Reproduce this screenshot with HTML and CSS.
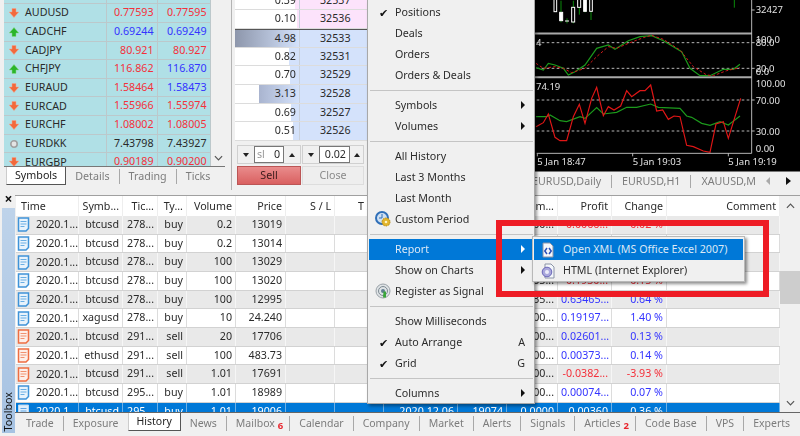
FILE: index.html
```html
<!DOCTYPE html>
<html lang="en">
<head>
<meta charset="utf-8">
<title>History report</title>
<link rel="stylesheet" href="styles.css">
</head>
<body>
<svg class="defs" aria-hidden="true">
  <symbol id="down" viewBox="0 0 10 10"><path d="M3 .5h4v3.500h2.800L5 9.500.2 4H3z" fill="#f2693c" stroke="#f7a58c" stroke-width=".5"/></symbol>
  <symbol id="up" viewBox="0 0 10 10"><path d="M3 9.500h4V6h2.800L5 .5.2 6H3z" fill="#2bb52b" stroke="#8ad88a" stroke-width=".5"/></symbol>
  <symbol id="flat" viewBox="0 0 10 10"><circle cx="5" cy="5" r="3.200" fill="#e4e4e4" stroke="#a0a0a0" stroke-width="1.600"/></symbol>
  <symbol id="docb" viewBox="0 0 13 15"><path d="M1.500 1h10v10.500l-2.500 2.500h-7.500z" fill="#e8f3fc" stroke="#3f93d8" stroke-width="1.500"/><path d="M3.500 4.500h6M3.500 7h6M3.500 9.500h4" stroke="#6aaee4"/></symbol>
  <symbol id="doco" viewBox="0 0 13 15"><path d="M1.500 1h10v10.500l-2.500 2.500h-7.500z" fill="#fdeee8" stroke="#ee6e42" stroke-width="1.500"/><path d="M3.500 4.500h6M3.500 7h6M3.500 9.500h4" stroke="#f1916f"/></symbol>
  <symbol id="docw" viewBox="0 0 13 15"><path d="M1.500 1h10v13h-10z" fill="#dfeefb" stroke="#bcd8f2"/><path d="M3.500 4.500h6M3.500 7h6M3.500 9.500h6" stroke="#5da4e4"/></symbol>
</svg>

<div class="top">
  <section class="market">
    <div class="mw-main">
      <div class="mw-list">
        <div class="mw-row mw-stub"><span></span><span></span><span></span></div>
        <div class="mw-row"><span class="mw-name"><svg class="ar"><use href="#down"/></svg>AUDUSD</span><span class="neg">0.77593</span><span class="neg">0.77595</span></div>
        <div class="mw-row"><span class="mw-name"><svg class="ar"><use href="#up"/></svg>CADCHF</span><span class="pos">0.69244</span><span class="pos">0.69249</span></div>
        <div class="mw-row"><span class="mw-name"><svg class="ar"><use href="#down"/></svg>CADJPY</span><span class="neg">80.921</span><span class="neg">80.927</span></div>
        <div class="mw-row"><span class="mw-name"><svg class="ar"><use href="#up"/></svg>CHFJPY</span><span class="neg">116.862</span><span class="pos">116.870</span></div>
        <div class="mw-row"><span class="mw-name"><svg class="ar"><use href="#down"/></svg>EURAUD</span><span class="neg">1.58464</span><span class="pos">1.58473</span></div>
        <div class="mw-row"><span class="mw-name"><svg class="ar"><use href="#down"/></svg>EURCAD</span><span class="neg">1.55966</span><span class="neg">1.55974</span></div>
        <div class="mw-row"><span class="mw-name"><svg class="ar"><use href="#down"/></svg>EURCHF</span><span class="neg">1.08002</span><span class="neg">1.08005</span></div>
        <div class="mw-row"><span class="mw-name"><svg class="ar"><use href="#flat"/></svg>EURDKK</span><span>7.43798</span><span>7.43927</span></div>
        <div class="mw-row"><span class="mw-name"><svg class="ar"><use href="#down"/></svg>EURGBP</span><span class="neg">0.90189</span><span class="neg">0.90200</span></div>
      </div>
      <div class="mw-scroll"><svg class="chev" viewBox="0 0 10 6"><path d="M1 1l4 4 4-4" fill="none" stroke="#555" stroke-width="1.300"/></svg></div>
    </div>
    <div class="tabs mw-tabs">
      <span class="tab active">Symbols</span>
      <span class="tab">Details</span>
      <span class="tab">Trading</span>
      <span class="tab last">Ticks</span>
    </div>
  </section>

  <section class="depth">
    <div class="dp-list">
      <div class="dp-row ask"><span class="dp-vol"><i class="bar bar-ask" style="width:4px"></i><b>0.39</b></span><span class="dp-price">32537</span></div>
      <div class="dp-row ask"><span class="dp-vol"><i class="bar bar-ask" style="width:2px"></i><b>0.10</b></span><span class="dp-price">32536</span></div>
      <div class="dp-row bid spread"><span class="dp-vol"><i class="bar bar-big" style="width:65px"></i><b>4.98</b></span><span class="dp-price">32533</span></div>
      <div class="dp-row bid"><span class="dp-vol"><i class="bar" style="width:10px"></i><b>0.82</b></span><span class="dp-price">32531</span></div>
      <div class="dp-row bid"><span class="dp-vol"><i class="bar" style="width:9px"></i><b>0.70</b></span><span class="dp-price">32529</span></div>
      <div class="dp-row bid"><span class="dp-vol"><i class="bar bar-mid" style="width:40px"></i><b>3.13</b></span><span class="dp-price">32528</span></div>
      <div class="dp-row bid"><span class="dp-vol"><i class="bar" style="width:8px"></i><b>0.69</b></span><span class="dp-price">32527</span></div>
      <div class="dp-row bid"><span class="dp-vol"><i class="bar" style="width:6px"></i><b>0.51</b></span><span class="dp-price">32526</span></div>
    </div>
    <div class="spin-row">
      <div class="spin spin-a"><span class="sbtn"><i class="tri-d"></i></span><span class="sinput"><em>sl</em>0</span><span class="sbtn"><i class="tri-u"></i></span></div>
      <div class="spin spin-b"><span class="sbtn"><i class="tri-d"></i></span><span class="sinput">0.02</span><span class="sbtn"><i class="tri-u"></i></span></div>
    </div>
    <div class="btn-row">
      <span class="btn sell">Sell</span>
      <span class="btn close">Close</span>
    </div>
  </section>

  <section class="charts">
    <div class="chart">
      <svg class="chart-svg" viewBox="0 0 810 516">
        <g class="candles">
          <path d="M75 0v2M93 2v36M93 62v5M111 55v15M130 2v20M130 66v4M148 22v22M165 35v2M183 35v25" stroke="#0a8a0a" stroke-width="3" fill="none"/>
          <rect x="72" y="-4" width="8" height="39" fill="#000" stroke="#fff" stroke-width="3"/>
          <rect x="89" y="37" width="9" height="25" fill="#fff" stroke="#fff" stroke-width="3"/>
          <path d="M105 63h12" stroke="#fff" stroke-width="3"/>
          <rect x="125" y="22" width="9" height="44" fill="#000" stroke="#fff" stroke-width="3"/>
          <rect x="143" y="-4" width="9" height="26" fill="#000" stroke="#fff" stroke-width="3"/>
          <rect x="161" y="-4" width="8" height="38" fill="#fff" stroke="#fff" stroke-width="3"/>
          <rect x="179" y="-4" width="8" height="38" fill="#000" stroke="#fff" stroke-width="3"/>
          <path d="M613 0v23" stroke="#0a8a0a" stroke-width="3"/>
        </g>
        <path class="pane" d="M0 100.500h665M0 232h665"/>
        <path class="dash" d="M20 128h645M20 205h645M20 300h645M20 393h645"/>
        <polyline class="g1" points="18,203 40,210 55,190 75,195 100,205 115,225 135,215 165,195 200,145 235,135 255,148 295,122 330,110 365,107 400,122 455,155 480,205 510,227 540,227 580,208 610,208 630,193"/>
        <polyline class="r1" points="18,190 40,205 75,200 100,205 125,218 165,205 200,170 235,140 260,145 300,128 340,113 365,106 400,118 450,150 490,200 530,225 550,227 590,212 630,203"/>
        <polyline class="g1" points="18,350 50,350 60,345 90,362 110,365 150,350 165,355 200,323 220,342 260,337 290,322 320,322 362,312 385,322 450,325 470,348 485,352 515,370 540,376 570,365 595,375 630,348"/>
        <polyline class="r2" points="18,380 40,368 55,342 75,412 90,422 110,422 130,350 148,313 165,370 185,295 200,262 220,347 235,320 252,330 272,318 290,272 305,290 330,272 345,272 362,255 380,333 398,330 415,358 432,348 450,350 470,436 490,440 520,453 540,457 558,372 580,365 595,415 615,350 632,295"/>
        <path class="axis" d="M665 0v460M20 460h645M22 460v9M308 460v9M595 460v9M665 30h9M665 128h9M665 205h9M665 300h9M665 393h9"/>
        <text class="tx" x="677" y="40">32427</text>
        <text class="tx" x="677" y="130">100.0</text>
        <text class="tx" x="677" y="139">80.0</text>
        <text class="tx" x="677" y="215">20.0</text>
        <text class="tx" x="677" y="225">0.0</text>
        <text class="tx" x="677" y="261">100.00</text>
        <text class="tx" x="677" y="311">70.00</text>
        <text class="tx" x="677" y="404">30.00</text>
        <text class="tx" x="677" y="456">0.00</text>
        <text class="tx" x="18" y="139">4</text>
        <text class="tx" x="18" y="269">74.19</text>
        <text class="tx" x="22" y="496">5 Jan 18:47</text>
        <text class="tx" x="308" y="496">5 Jan 19:03</text>
        <text class="tx" x="595" y="496">5 Jan 19:19</text>
      </svg>
    </div>
    <div class="tabs ch-tabs">
      <span class="tab">EURUSD,Daily</span>
      <span class="tab">EURUSD,H1</span>
      <span class="tab last">XAUUSD,M</span>
      <i class="nav-l"></i><i class="nav-r"></i>
    </div>
  </section>
</div>

<div class="bottom">
  <aside class="toolbox">
    <span class="tb-x">&#215;</span>
    <div class="tb-strip"><span class="tb-label">Toolbox</span></div>
  </aside>
  <div class="tb-main">
    <div class="grid-wrap">
      <div class="grid">
        <div class="row head"><span class="l">Time</span><span class="r">Symb...</span><span class="r">Tic...</span><span class="r">Ty...</span><span class="r">Volume</span><span class="r">Price</span><span class="r">S / L</span><span class="r">T / P</span><span class="r">Time</span><span class="r">Price</span><span class="r">Comm...</span><span class="r">Profit</span><span class="r">Change</span><span class="r">Comment</span></div>
        <div class="row"><span class="t"><svg class="doc"><use href="#docb"/></svg>2020.1...</span><span class="r">btcusd</span><span class="r">278...</span><span class="r">buy</span><span class="r">0.2</span><span class="r">13019</span><span></span><span></span><span></span><span></span><span class="r">00...</span><span class="r neg">0.0066...</span><span class="r neg">0.02 %</span><span></span></div>
        <div class="row"><span class="t"><svg class="doc"><use href="#docb"/></svg>2020.1...</span><span class="r">btcusd</span><span class="r">278...</span><span class="r">buy</span><span class="r">0.2</span><span class="r">13014</span><span></span><span></span><span></span><span></span><span class="r">00...</span><span class="r neg">0.0091...</span><span class="r neg">0.03 %</span><span></span></div>
        <div class="row"><span class="t"><svg class="doc"><use href="#docb"/></svg>2020.1...</span><span class="r">btcusd</span><span class="r">278...</span><span class="r">buy</span><span class="r">100</span><span class="r">13029</span><span></span><span></span><span></span><span></span><span class="r">00...</span><span class="r neg">0.1245...</span><span class="r neg">0.11 %</span><span></span></div>
        <div class="row"><span class="t"><svg class="doc"><use href="#docb"/></svg>2020.1...</span><span class="r">btcusd</span><span class="r">278...</span><span class="r">buy</span><span class="r">100</span><span class="r">13020</span><span></span><span></span><span></span><span></span><span class="r">55...</span><span class="r neg">0.1930...</span><span class="r neg">0.15 %</span><span></span></div>
        <div class="row"><span class="t"><svg class="doc"><use href="#docb"/></svg>2020.1...</span><span class="r">btcusd</span><span class="r">278...</span><span class="r">buy</span><span class="r">100</span><span class="r">12995</span><span></span><span></span><span></span><span></span><span class="r">35...</span><span class="r pos">0.63465...</span><span class="r pos">0.64 %</span><span></span></div>
        <div class="row"><span class="t"><svg class="doc"><use href="#docb"/></svg>2020.1...</span><span class="r">xagusd</span><span class="r">278...</span><span class="r">buy</span><span class="r">10</span><span class="r">24.240</span><span></span><span></span><span></span><span></span><span class="r">00...</span><span class="r pos">0.19197...</span><span class="r pos">1.40 %</span><span></span></div>
        <div class="row"><span class="t"><svg class="doc"><use href="#doco"/></svg>2020.1...</span><span class="r">btcusd</span><span class="r">291...</span><span class="r">sell</span><span class="r">20</span><span class="r">17706</span><span></span><span></span><span></span><span></span><span class="r">00...</span><span class="r pos">0.02601...</span><span class="r pos">0.13 %</span><span></span></div>
        <div class="row"><span class="t"><svg class="doc"><use href="#doco"/></svg>2020.1...</span><span class="r">ethusd</span><span class="r">291...</span><span class="r">sell</span><span class="r">100</span><span class="r">483.73</span><span></span><span></span><span></span><span></span><span class="r">00...</span><span class="r pos">0.00373...</span><span class="r pos">0.14 %</span><span></span></div>
        <div class="row"><span class="t"><svg class="doc"><use href="#doco"/></svg>2020.1...</span><span class="r">btcusd</span><span class="r">291...</span><span class="r">sell</span><span class="r">1.01</span><span class="r">17691</span><span></span><span></span><span></span><span></span><span class="r">00...</span><span class="r neg">-0.0382...</span><span class="r neg">-3.93 %</span><span></span></div>
        <div class="row"><span class="t"><svg class="doc"><use href="#docb"/></svg>2020.1...</span><span class="r">btcusd</span><span class="r">295...</span><span class="r">buy</span><span class="r">1.01</span><span class="r">18989</span><span></span><span></span><span></span><span></span><span class="r">00...</span><span class="r pos">0.00074...</span><span class="r pos">0.07 %</span><span></span></div>
        <div class="row sel"><span class="t"><svg class="doc"><use href="#docw"/></svg>2020.1...</span><span class="r">btcusd</span><span class="r">295...</span><span class="r">buy</span><span class="r">1.01</span><span class="r">19006</span><span></span><span></span><span class="r">2020.12.06</span><span class="r">19074</span><span class="r">0.0000</span><span class="r">0.00360</span><span class="r">0.36 %</span><span></span></div>
      </div>
      <div class="vscroll">
        <svg class="chev" viewBox="0 0 10 6"><path d="M1 5l4-4 4 4" fill="none" stroke="#555" stroke-width="1.300"/></svg>
        <div class="thumb-track"><div class="thumb"></div></div>
        <svg class="chev" viewBox="0 0 10 6"><path d="M1 1l4 4 4-4" fill="none" stroke="#555" stroke-width="1.300"/></svg>
      </div>
    </div>
    <div class="tabs main-tabs">
      <span class="tab">Trade</span>
      <span class="tab plain">Exposure</span>
      <span class="tab active">History</span>
      <span class="tab">News</span>
      <span class="tab">Mailbox<sub>6</sub></span>
      <span class="tab">Calendar</span>
      <span class="tab">Company</span>
      <span class="tab">Market</span>
      <span class="tab">Alerts</span>
      <span class="tab">Signals</span>
      <span class="tab">Articles<sub>2</sub></span>
      <span class="tab">Code Base</span>
      <span class="tab">VPS</span>
      <span class="tab last">Experts</span>
    </div>
  </div>
</div>

<nav class="menu">
  <div class="mi"><span class="mi-ic check">&#10004;</span>Positions</div>
  <div class="mi"><span class="mi-ic"></span>Deals</div>
  <div class="mi"><span class="mi-ic"></span>Orders</div>
  <div class="mi"><span class="mi-ic"></span>Orders &amp; Deals</div>
  <hr class="msep">
  <div class="mi"><span class="mi-ic"></span>Symbols<i class="sub"></i></div>
  <div class="mi"><span class="mi-ic"></span>Volumes<i class="sub"></i></div>
  <hr class="msep">
  <div class="mi"><span class="mi-ic"></span>All History</div>
  <div class="mi"><span class="mi-ic"></span>Last 3 Months</div>
  <div class="mi"><span class="mi-ic"></span>Last Month</div>
  <div class="mi"><span class="mi-ic"><svg class="mic" viewBox="0 0 16 16"><circle cx="7" cy="7" r="6" fill="#cfe0f2" stroke="#2f6fb8" stroke-width="2"/><path d="M7 3v4h-3" fill="none" stroke="#2f6fb8"/><circle cx="11" cy="11" r="4" fill="#e2b52c" stroke="#b78a16" stroke-dasharray="1.500 1"/><circle cx="11" cy="11" r="1.300" fill="#fff3c0"/></svg></span>Custom Period</div>
  <hr class="msep">
  <div class="mi on"><span class="mi-ic"></span>Report<i class="sub"></i></div>
  <div class="mi"><span class="mi-ic"></span>Show on Charts<i class="sub"></i></div>
  <div class="mi"><span class="mi-ic"><svg class="mic" viewBox="0 0 16 16"><circle cx="8" cy="8" r="7" fill="#dfe3e6" stroke="#9aa2a8"/><circle cx="8" cy="8" r="4.500" fill="none" stroke="#7d8a92"/><circle cx="8" cy="8" r="2" fill="#5f7d8f"/><path d="M8.500 8.500h2.500v6h-3z" fill="#3aa63a"/></svg></span>Register as Signal</div>
  <hr class="msep">
  <div class="mi"><span class="mi-ic"></span>Show Milliseconds</div>
  <div class="mi"><span class="mi-ic check">&#10004;</span>Auto Arrange<span class="key">A</span></div>
  <div class="mi"><span class="mi-ic check">&#10004;</span>Grid<span class="key">G</span></div>
  <hr class="msep">
  <div class="mi"><span class="mi-ic"></span>Columns<i class="sub"></i></div>
</nav>

<div class="callout"></div>

<nav class="submenu">
  <div class="si on"><svg class="sic" viewBox="0 0 14 16"><path d="M2 1h7l3 3v11H2z" fill="#f4f7fb" stroke="#8b93a6"/><path d="M6 6L3.800 9 6 12M8 6l2.200 3L8 12" fill="none" stroke="#2a4fb8" stroke-width="1.500"/></svg>Open XML (MS Office Excel 2007)</div>
  <div class="si"><svg class="sic" viewBox="0 0 14 16"><path d="M4 1h6l3 3v11H4z" fill="#f4f7fb" stroke="#8b93a6"/><circle cx="6" cy="9" r="4.800" fill="#a9a7dc" stroke="#6a66b8"/><circle cx="6" cy="9" r="2" fill="#ececfa"/></svg>HTML (Internet Explorer)</div>
</nav>
</body>
</html>
```

FILE: styles.css
```css
* { box-sizing: border-box; }
html, body { margin: 0; padding: 0; }
body {
  width: 800px;
  height: 436px;
  overflow: hidden;
  position: relative;
  background: #f0f0f0;
  color: #2a2a2a;
  font: 10.700px/1 "Noto Sans", "Open Sans", sans-serif;
  filter: blur(.3px);
}
.defs { display: block; width: 0; height: 0; }
.neg { color: #f4303a; }
.pos { color: #3434ff; }

/* top */
.top { display: flex; height: 190px; }
.market { width: 232px; padding-left: 4px; padding-right: 6px; border-right: 1px solid #b4b4b4; display: flex; flex-direction: column; flex: none; }
.mw-main { display: flex; height: 167px; border-bottom: 1px solid #777; }
.mw-list { width: 207px; overflow: hidden; background: #b0e0e6; flex: none; }
.mw-row {
  display: grid;
  grid-template-columns: 103px 51px 53px;
  height: 18.670px;
  align-items: center;
  border-bottom: 1px solid #bcc8cb;
}
.mw-row.mw-stub { height: 4.200px; }
.mw-row > span { text-align: right; padding-right: 3.500px; height: 100%; line-height: 17.500px; border-right: 1px solid #bcc8cb; }
.mw-row > span.mw-name { text-align: left; padding-left: 5px; display: flex; align-items: center; gap: 6px; }
.ar { width: 10px; height: 10px; flex: none; }
.mw-scroll { flex: 1; display: flex; align-items: flex-end; justify-content: center; padding-bottom: 5px; }
.chev { display: block; width: 9px; height: 6px; flex: none; }

/* tabs */
.tabs { display: flex; align-items: center; color: #7c7c7c; }
.tab { padding: 0 9.500px; border-right: 1px solid #a8a8a8; line-height: 13px; white-space: nowrap; }
.tab.last { border-right: 0; }
.tab.plain { border-right: 0; }
.tab.active {
  background: #fff;
  color: #222;
  border-right: 1px solid #555;
  border-bottom: 1px solid #555;
  border-left: 1px solid #ccc;
}
.mw-tabs { height: 18px; padding-left: 2px; align-items: flex-start; }
.mw-tabs .tab { height: 15px; margin-top: 2px; line-height: 14px; padding: 0 9px; }
.mw-tabs .tab.active { height: 18px; margin-top: 0; line-height: 16px; padding: 0 8px; border-right-color: #555; }

/* depth */
.depth { width: 134px; display: flex; flex-direction: column; margin-left: 3px; flex: none; }
.dp-list { height: 141px; display: flex; flex-direction: column; justify-content: flex-end; overflow: hidden; background: #fff; flex: none; }
.dp-row { display: grid; grid-template-columns: 65px 69px; height: 18.670px; flex: none; border-bottom: 1px solid #dcdcdc; background: #fff; }
.dp-row.spread { border-top: 1px solid #555; }
.dp-vol { position: relative; display: block; border-right: 1px solid #c8d0dc; }
.dp-vol b { position: absolute; right: 3px; top: 3px; font-weight: 400; }
.dp-price { text-align: left; padding-left: 20px; padding-top: 3px; }
.ask .dp-price { background: #fce3fb; }
.bid .dp-price { background: #d4e2fb; }
.bar { position: absolute; right: 0; top: 0; bottom: 0; background: #d4e2fb; }
.bar-ask { background: #fce3fb; }
.bar-big { background: linear-gradient(90deg, #8c95aa, #d4e2fb); }
.bar-mid { background: linear-gradient(90deg, #a9b4cf, #d4e2fb); }
.spin-row { display: flex; gap: 1px; margin-top: 4px; height: 19px; padding-left: 2px; }
.spin { display: flex; border: 1px solid #d0d0d0; background: #f0f0f0; }
.spin-a { width: 64px; }
.spin-b { width: 62px; }
.sbtn { width: 16px; display: flex; align-items: center; justify-content: center; flex: none; }
.spin-b .sbtn:last-child { width: 13px; }
.sinput { flex: 1; background: #fff; border: 1px solid #777; text-align: right; padding: 2px 3px 0 2px; display: flex; justify-content: space-between; }
.spin-b .sinput { justify-content: flex-end; }
.sinput em { font-style: normal; color: #999; }
.tri-d, .tri-u { display: block; width: 0; height: 0; border-left: 3.500px solid transparent; border-right: 3.500px solid transparent; }
.tri-d { border-top: 4px solid #222; }
.tri-u { border-bottom: 4px solid #222; }
.btn-row { display: flex; gap: 1px; padding-left: 2px; margin-top: 2px; height: 19px; }
.btn { display: flex; align-items: center; justify-content: center; }
.sell { width: 64px; background: linear-gradient(#e98c8c, #d96060); border: 1px solid #b55; color: #3a1a1a; }
.close { width: 62px; background: #eee; border: 1px solid #ddd; color: #8a8a8a; }

/* charts */
.charts { flex: 1; min-width: 0; display: flex; flex-direction: column; }
.chart { height: 172px; background: #000; display: flex; justify-content: flex-end; border-bottom: 1px solid #777; }
.chart-svg { width: 270px; height: 172px; display: block; flex: none; }
.pane { stroke: #a9a9a9; stroke-width: 6; fill: none; }
.dash { stroke: #d8d8d8; stroke-width: 2.500; stroke-dasharray: 8 7; fill: none; }
.axis { stroke: #d8d8d8; stroke-width: 2.500; fill: none; }
.g1 { fill: none; stroke: #1c9a1c; stroke-width: 3.500; }
.r1 { fill: none; stroke: #d01818; stroke-width: 3; stroke-dasharray: 8 6; }
.r2 { fill: none; stroke: #e01616; stroke-width: 3.500; }
.tx { fill: #e4e4e4; font: 28.500px "Noto Sans", sans-serif; }
.ch-tabs { height: 18px; justify-content: flex-end; padding-right: 9px; overflow: hidden; }
.ch-tabs .tab { padding: 0 10px; }
.nav-l, .nav-r { display: block; width: 0; height: 0; border-top: 4px solid transparent; border-bottom: 4px solid transparent; flex: none; }
.nav-l { border-right: 4px solid #aaa; }
.nav-r { border-left: 5px solid #111; margin-left: 16px; }

/* bottom */
.bottom { display: flex; height: 246px; }
.toolbox { width: 15px; display: flex; flex-direction: column; padding-left: 2px; flex: none; }
.tb-x { height: 18px; font-size: 14px; line-height: 18px; text-align: center; color: #111; font-weight: 700; }
.tb-strip { flex: 1; margin-bottom: 3px; background: linear-gradient(#bed3ea, #a6c2e2); display: flex; align-items: flex-end; justify-content: center; }
.tb-label { writing-mode: vertical-rl; transform: rotate(180deg); color: #111; padding-top: 2px; line-height: 13px; }
.tb-main { flex: 1; min-width: 0; display: flex; flex-direction: column; padding-top: 5px; }
.grid-wrap { display: flex; height: 218px; border-top: 1px solid #a0a0a0; border-bottom: 1px solid #666; }
.grid { width: 764px; overflow: hidden; background: #fff; margin-left: 1px; flex: none; }
.row {
  display: grid;
  grid-template-columns: 63px 44px 35px 29px 49px 50px 49px 49px 74px 49px 51px 54px 55px 113px;
  height: 18.670px;
  background: #fff;
  border-bottom: 1px solid #d2d2d2;
}
.row:nth-child(even) { background: #e9e9e9; }
.row > span { border-right: 1px solid #dcdcdc; padding: 0 3px; line-height: 17px; white-space: nowrap; overflow: hidden; }
.row:nth-child(even) > span { border-right-color: #f6f6f6; }
.r { text-align: right; }
.row > span.l { text-align: left; padding-left: 5px; }
.row > span.t { display: flex; align-items: center; gap: 6px; padding-left: 1px; }
.doc { width: 13px; height: 15px; flex: none; }
.row.head { height: 20px; background: #fff; border-bottom: 0; }
.row.head > span { line-height: 20px; border-right-color: #eee; }
.row.sel, .row.sel:nth-child(even) { background: #0078d7; color: #fff; }
.row.sel > span { border-right-color: #6eb0e6; color: #fff; }
.vscroll { flex: 1; display: flex; flex-direction: column; align-items: center; padding: 7px 0 6px; background: #f0f0f0; }
.thumb-track { flex: 1; width: 100%; padding-top: 62px; }
.thumb { height: 33px; background: #cdcdcd; }
.main-tabs { height: 22px; align-items: flex-start; padding-left: 2px; overflow: hidden; font-size: 10.500px; }
.main-tabs .tab { margin-top: 3px; height: 15px; line-height: 14px; padding: 0 9px; }
.main-tabs .tab.active { margin-top: 0; height: 18px; line-height: 17px; padding: 0 8px; }
sub { color: #e8242c; font-size: 9.500px; font-weight: 700; vertical-align: baseline; position: relative; top: 2px; margin-left: 3px; margin-right: -3px; line-height: 0; }

/* overlays */
.menu {
  position: absolute;
  left: 367px;
  top: 0;
  width: 168px;
  height: 404px;
  padding: 1.500px 1px 0;
  background: #f0f0f0;
  border: 1px solid #a8a8a8;
  border-top: 0;
  box-shadow: 2px 2px 3px rgba(0, 0, 0, .4);
  color: #2c2c2c;
}
.mi { display: flex; align-items: center; height: 21px; padding-right: 6px; }
.mi.on { background: #0078d7; color: #dce9f6; }
.mi-ic { width: 26px; flex: none; display: flex; justify-content: center; padding-left: 2px; }
.check { font-size: 11px; color: #111; }
.mic { width: 16px; height: 16px; display: block; }
.key { margin-left: auto; padding-right: 2px; }
.sub { margin-left: auto; margin-right: 2px; width: 0; height: 0; border-top: 4px solid transparent; border-bottom: 4px solid transparent; border-left: 4px solid #111; }
.mi.on .sub { border-left-color: #fff; }
.msep { height: 1px; border: 0; background: #c4c4c4; margin: 4px 0 4px 1px; }
.callout { position: absolute; left: 496px; top: 220px; width: 273px; height: 77px; border: 6px solid #ee1c25; }
.submenu {
  position: absolute;
  left: 532px;
  top: 236px;
  width: 213px;
  height: 46px;
  padding: 2px 1px;
  background: #f0f0f0;
  border: 1px solid #b8b8b8;
  box-shadow: 2px 2px 3px rgba(0, 0, 0, .45);
  color: #2c2c2c;
}
.si { display: flex; align-items: center; height: 21px; padding-left: 7px; gap: 8px; white-space: nowrap; }
.si.on { background: #0078d7; color: #dce9f6; }
.sic { width: 14px; height: 16px; flex: none; }
```
